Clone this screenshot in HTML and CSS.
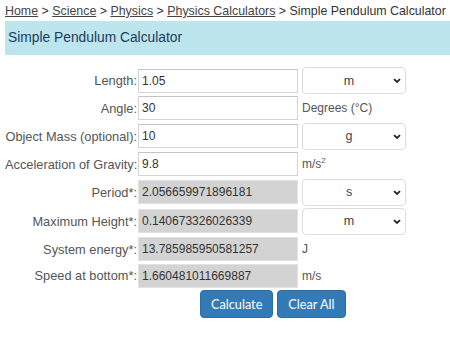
FILE: index.html
```html
<!DOCTYPE html>
<html lang="en">

<head>
    <meta charset="UTF-8">
    <meta name="viewport" content="width=device-width, initial-scale=1.0">
    <title>Simple Pendulum Calculator</title>
    <link rel="stylesheet" href="styles.css">
</head>

<body>
    <div class="page">
        <nav class="crumbs">
            <a href="#">Home</a> &gt; <a href="#">Science</a> &gt; <a href="#">Physics</a> &gt;
            <a href="#">Physics Calculators</a> &gt; Simple Pendulum Calculator
        </nav>
        <h1 class="title">Simple Pendulum Calculator</h1>

        <form class="calc" id="pendulumForm">
            <label for="length">Length:</label>
            <input type="text" id="length" value="1.05">
            <div class="unit">
                <select id="lengthUnit"><option>m</option><option>cm</option><option>ft</option></select>
                <svg class="chev" viewBox="0 0 10 6"><path d="M1.2 1.2 5 4.8 8.8 1.2" /></svg>
            </div>

            <label for="angle">Angle:</label>
            <input type="text" id="angle" value="30">
            <div class="unit">Degrees (°C)</div>

            <label for="mass">Object Mass (optional):</label>
            <input type="text" id="mass" value="10">
            <div class="unit">
                <select id="massUnit"><option>g</option><option>kg</option><option>lb</option></select>
                <svg class="chev" viewBox="0 0 10 6"><path d="M1.2 1.2 5 4.8 8.8 1.2" /></svg>
            </div>

            <label for="gravity">Acceleration of Gravity:</label>
            <input type="text" id="gravity" value="9.8">
            <div class="unit">m/s<sup>2</sup></div>

            <label for="period">Period*:</label>
            <input type="text" id="period" class="result" value="2.056659971896181" readonly>
            <div class="unit">
                <select id="periodUnit"><option>s</option><option>min</option></select>
                <svg class="chev" viewBox="0 0 10 6"><path d="M1.2 1.2 5 4.8 8.8 1.2" /></svg>
            </div>

            <label for="height">Maximum Height*:</label>
            <input type="text" id="height" class="result" value="0.140673326026339" readonly>
            <div class="unit">
                <select id="heightUnit"><option>m</option><option>cm</option></select>
                <svg class="chev" viewBox="0 0 10 6"><path d="M1.2 1.2 5 4.8 8.8 1.2" /></svg>
            </div>

            <label for="energy">System energy*:</label>
            <input type="text" id="energy" class="result" value="13.785985950581257" readonly>
            <div class="unit">J</div>

            <label for="speed">Speed at bottom*:</label>
            <input type="text" id="speed" class="result" value="1.660481011669887" readonly>
            <div class="unit">m/s</div>

            <div class="buttons">
                <button type="button">Calculate</button>
                <button type="reset">Clear All</button>
            </div>
        </form>
    </div>
</body>

</html>
```

FILE: styles.css
```css
:root {
    --text-color: #444444;
    --label-color: #555555;
    --title-bg: #bce5ee;
    --title-color: #1d3b5a;
    --border-color: #d4d4d4;
    --result-bg: #d3d3d3;
    --primary-color: #337ab7;
    --primary-border: #2e6da4;
}

body {
    margin: 0;
    font-family: "Liberation Sans", Arial, sans-serif;
    font-size: 12.8px;
    color: var(--text-color);
    background-color: #ffffff;
}

.page {
    padding: 2px 0 0 5px;
}

.crumbs {
    font-size: 12.4px;
    line-height: 18px;
    color: #333333;
    white-space: nowrap;
}

.crumbs a {
    color: #444444;
}

.title {
    margin: 1px 0 0 0;
    height: 34px;
    line-height: 34px;
    padding-left: 3px;
    font-size: 13.8px;
    font-weight: normal;
    color: var(--title-color);
    background-color: var(--title-bg);
}

.calc {
    display: grid;
    grid-template-columns: 133px 160px 110px;
    row-gap: 2.4px;
    align-items: center;
    margin-top: 12px;
}

.calc label {
    text-align: right;
    padding-right: 1px;
    color: var(--label-color);
    white-space: nowrap;
}

.calc input {
    height: 24px;
    box-sizing: border-box;
    padding: 0 3px;
    font-family: inherit;
    font-size: 12px;
    color: #333333;
    border: 1px solid var(--border-color);
    border-top-color: #c4c4c4;
    width: 100%;
}

.calc input.result {
    background-color: var(--result-bg);
    border-color: #e2e2e2;
}

.unit {
    position: relative;
    padding-left: 4px;
    font-size: 12px;
    color: var(--label-color);
}

.unit sup {
    font-size: 8px;
    line-height: 0;
}

.unit select {
    appearance: none;
    width: 104px;
    height: 27px;
    box-sizing: border-box;
    border: 1px solid #dddddd;
    border-radius: 4px;
    background-color: #ffffff;
    font-family: inherit;
    font-size: 12.5px;
    color: #444444;
    text-align-last: center;
    padding: 0 10px 0 0;
}

.chev {
    position: absolute;
    right: 7px;
    top: 11px;
    width: 8px;
    height: 5px;
    fill: none;
    stroke: #222222;
    stroke-width: 2.2;
    pointer-events: none;
}

.buttons {
    grid-column: 2 / 4;
    display: flex;
    gap: 4px;
    padding-left: 62px;
    margin-top: 0;
}

.buttons button {
    height: 28px;
    padding: 0 10px;
    font-family: Lato, Arial, sans-serif;
    font-size: 12.7px;
    color: #ffffff;
    background-color: var(--primary-color);
    border: 1px solid var(--primary-border);
    border-radius: 4px;
    cursor: pointer;
}
```
